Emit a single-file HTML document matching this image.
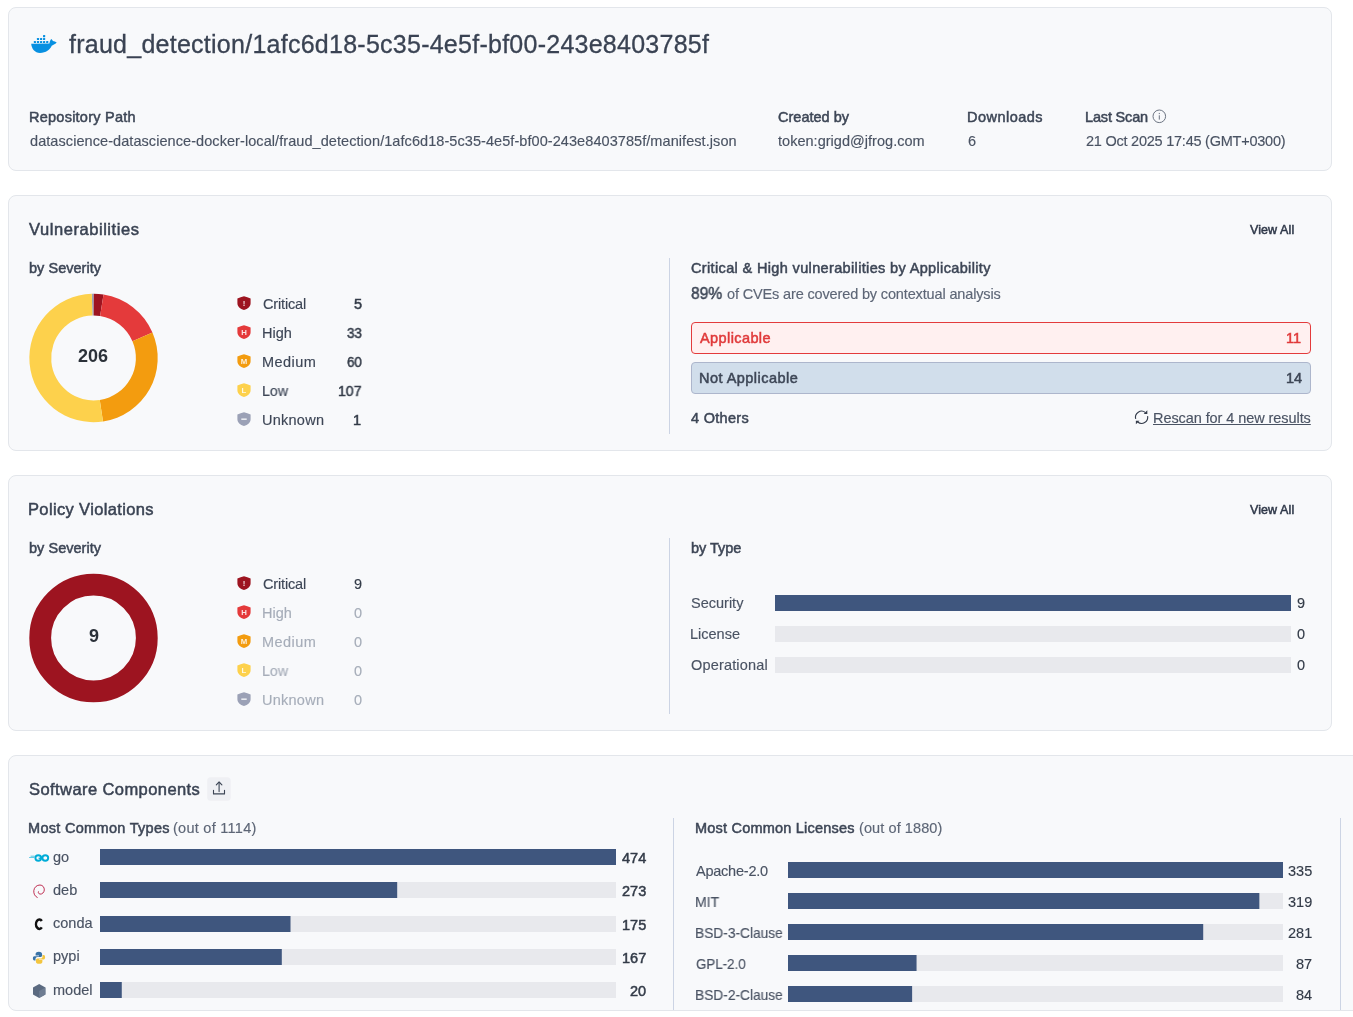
<!DOCTYPE html>
<html><head><meta charset="utf-8"><title>fraud_detection</title>
<style>
html,body{margin:0;padding:0;background:#ffffff;width:1353px;height:1017px;overflow:hidden;position:relative;font-family:"Liberation Sans",sans-serif;}
.card{position:absolute;left:8px;width:1322px;background:#f8f9fb;border:1px solid #e3e6eb;border-radius:8px;box-sizing:content-box;}
.t{position:absolute;will-change:transform;white-space:nowrap;line-height:1;font-family:"Liberation Sans",sans-serif;}
.box{position:absolute;box-sizing:border-box;border-radius:4px;}
.vline{position:absolute;width:1px;background:#ccd4e4;}
svg.full{position:absolute;left:0;top:0;}
</style></head><body>
<div class="card" style="top:7px;height:162px;"></div>
<div class="card" style="top:195px;height:254px;"></div>
<div class="card" style="top:475px;height:254px;"></div>
<div class="card" style="top:755px;height:254px;width:1400px;"></div>
<div class="vline" style="left:669px;top:258px;height:176px;"></div>
<div class="vline" style="left:669px;top:538px;height:176px;"></div>
<div class="vline" style="left:673px;top:818px;height:192px;"></div>
<div class="vline" style="left:1340px;top:818px;height:192px;"></div>
<div class="box" style="left:691px;top:322px;width:620px;height:32px;background:#fff0f0;border:1px solid #e33b3c;"></div>
<div class="box" style="left:691px;top:362px;width:620px;height:32px;background:#d1deeb;border:1px solid #adb6cc;"></div>
<svg class="full" width="1353" height="1017" viewBox="0 0 1353 1017" style="will-change:transform">
<path fill="#0890e1" d="M31.2,43.8 L49.4,43.6 C49.6,41.8 50.3,39.8 51.4,38.9 C52,39.5 52.6,40.4 52.9,41.1 C54.2,41.2 55.6,41.7 56.7,42.4 C55.9,43.5 54.9,44.2 53.9,44.5 C53,45.2 52.2,45.6 51.7,45.8 C50,49.8 46,52.9 40,52.9 C34.8,52.9 31.7,49 31.2,43.8 Z"/><rect x="43.0" y="35.1" width="2.2" height="2.1" rx="0.5" fill="#0890e1"/><rect x="36.9" y="38.0" width="2.2" height="2.1" rx="0.5" fill="#0890e1"/><rect x="40.0" y="38.0" width="2.2" height="2.1" rx="0.5" fill="#0890e1"/><rect x="43.0" y="38.0" width="2.2" height="2.1" rx="0.5" fill="#0890e1"/><rect x="33.8" y="41.0" width="2.2" height="2.1" rx="0.5" fill="#0890e1"/><rect x="36.9" y="41.0" width="2.2" height="2.1" rx="0.5" fill="#0890e1"/><rect x="40.0" y="41.0" width="2.2" height="2.1" rx="0.5" fill="#0890e1"/><rect x="43.0" y="41.0" width="2.2" height="2.1" rx="0.5" fill="#0890e1"/><rect x="46.1" y="41.0" width="2.2" height="2.1" rx="0.5" fill="#0890e1"/><circle cx="1159.3" cy="116.3" r="6.3" fill="none" stroke="#6b7381" stroke-width="1"/><rect x="1158.8" y="115.3" width="1" height="4.3" fill="#6b7381"/><rect x="1158.8" y="112.9" width="1" height="1.2" fill="#6b7381"/><path d="M91.82,293.82 A64.2,64.2 0 0 1 93.78,293.80 L93.68,315.60 A42.4,42.4 0 0 0 92.39,315.61 Z" fill="#9ba1b6"/><path d="M93.78,293.80 A64.2,64.2 0 0 1 103.53,294.59 L100.12,316.12 A42.4,42.4 0 0 0 93.68,315.60 Z" fill="#9d1420"/><path d="M103.53,294.59 A64.2,64.2 0 0 1 152.44,332.56 L132.43,341.20 A42.4,42.4 0 0 0 100.12,316.12 Z" fill="#e43a3b"/><path d="M152.44,332.56 A64.2,64.2 0 0 1 102.98,421.50 L99.76,399.94 A42.4,42.4 0 0 0 132.43,341.20 Z" fill="#f39c0f"/><path d="M102.98,421.50 A64.2,64.2 0 1 1 91.82,293.82 L92.39,315.61 A42.4,42.4 0 1 0 99.76,399.94 Z" fill="#fdd14c"/><circle cx="93.5" cy="638" r="53.3" fill="none" stroke="#9d1420" stroke-width="21.800000000000004"/><path d="M244,296.2 C246.2,296.9 248.5,297.6 250.6,298.6 L250.6,303.2 C250.6,306.6 247.8,308.9 244,310 C240.2,308.9 237.4,306.6 237.4,303.2 L237.4,298.6 C239.5,297.6 241.8,296.9 244,296.2 Z" fill="#9d1420"/><text x="244" y="306" font-family="Liberation Sans" font-weight="700" font-size="7.8" fill="#fff" fill-opacity="0.85" text-anchor="middle">!</text><path d="M244,325.2 C246.2,325.9 248.5,326.6 250.6,327.6 L250.6,332.2 C250.6,335.6 247.8,337.9 244,339 C240.2,337.9 237.4,335.6 237.4,332.2 L237.4,327.6 C239.5,326.6 241.8,325.9 244,325.2 Z" fill="#e43a3b"/><text x="244" y="335" font-family="Liberation Sans" font-weight="700" font-size="7.8" fill="#fff" fill-opacity="0.85" text-anchor="middle">H</text><path d="M244,354.2 C246.2,354.9 248.5,355.6 250.6,356.6 L250.6,361.2 C250.6,364.6 247.8,366.9 244,368 C240.2,366.9 237.4,364.6 237.4,361.2 L237.4,356.6 C239.5,355.6 241.8,354.9 244,354.2 Z" fill="#f39c0f"/><text x="244" y="364" font-family="Liberation Sans" font-weight="700" font-size="7.8" fill="#fff" fill-opacity="0.85" text-anchor="middle">M</text><path d="M244,383.2 C246.2,383.9 248.5,384.6 250.6,385.6 L250.6,390.2 C250.6,393.6 247.8,395.9 244,397 C240.2,395.9 237.4,393.6 237.4,390.2 L237.4,385.6 C239.5,384.6 241.8,383.9 244,383.2 Z" fill="#fdd14c"/><text x="244" y="393" font-family="Liberation Sans" font-weight="700" font-size="7.8" fill="#fff" fill-opacity="0.85" text-anchor="middle">L</text><path d="M244,412.2 C246.2,412.9 248.5,413.6 250.6,414.6 L250.6,419.2 C250.6,422.6 247.8,424.9 244,426 C240.2,424.9 237.4,422.6 237.4,419.2 L237.4,414.6 C239.5,413.6 241.8,412.9 244,412.2 Z" fill="#9ba1b6"/><rect x="241.3" y="418.4" width="5.4" height="1.6" fill="#e9ebf0"/><path d="M244,576.2 C246.2,576.9 248.5,577.6 250.6,578.6 L250.6,583.2 C250.6,586.6 247.8,588.9 244,590 C240.2,588.9 237.4,586.6 237.4,583.2 L237.4,578.6 C239.5,577.6 241.8,576.9 244,576.2 Z" fill="#9d1420"/><text x="244" y="586" font-family="Liberation Sans" font-weight="700" font-size="7.8" fill="#fff" fill-opacity="0.85" text-anchor="middle">!</text><path d="M244,605.2 C246.2,605.9 248.5,606.6 250.6,607.6 L250.6,612.2 C250.6,615.6 247.8,617.9 244,619 C240.2,617.9 237.4,615.6 237.4,612.2 L237.4,607.6 C239.5,606.6 241.8,605.9 244,605.2 Z" fill="#e43a3b"/><text x="244" y="615" font-family="Liberation Sans" font-weight="700" font-size="7.8" fill="#fff" fill-opacity="0.85" text-anchor="middle">H</text><path d="M244,634.2 C246.2,634.9 248.5,635.6 250.6,636.6 L250.6,641.2 C250.6,644.6 247.8,646.9 244,648 C240.2,646.9 237.4,644.6 237.4,641.2 L237.4,636.6 C239.5,635.6 241.8,634.9 244,634.2 Z" fill="#f39c0f"/><text x="244" y="644" font-family="Liberation Sans" font-weight="700" font-size="7.8" fill="#fff" fill-opacity="0.85" text-anchor="middle">M</text><path d="M244,663.2 C246.2,663.9 248.5,664.6 250.6,665.6 L250.6,670.2 C250.6,673.6 247.8,675.9 244,677 C240.2,675.9 237.4,673.6 237.4,670.2 L237.4,665.6 C239.5,664.6 241.8,663.9 244,663.2 Z" fill="#fdd14c"/><text x="244" y="673" font-family="Liberation Sans" font-weight="700" font-size="7.8" fill="#fff" fill-opacity="0.85" text-anchor="middle">L</text><path d="M244,692.2 C246.2,692.9 248.5,693.6 250.6,694.6 L250.6,699.2 C250.6,702.6 247.8,704.9 244,706 C240.2,704.9 237.4,702.6 237.4,699.2 L237.4,694.6 C239.5,693.6 241.8,692.9 244,692.2 Z" fill="#9ba1b6"/><rect x="241.3" y="698.4" width="5.4" height="1.6" fill="#e9ebf0"/><g fill="none" stroke="#343c4b" stroke-width="1.15"><path d="M1135.7,418.9 A6.1,6.1 0 0 1 1145.5,412.6"/><path d="M1147.6,416.2 A6.1,6.1 0 0 1 1137.7,422.0"/></g><path d="M1147.3,410.3 L1147.3,413.9 L1143.7,413.9 Z" fill="#343c4b"/><path d="M1135.9,420.7 L1139.5,420.7 L1135.9,424.3 Z" fill="#343c4b"/><rect x="207.2" y="777.2" width="23.5" height="23.5" rx="3.5" fill="#eff0f4"/><g fill="none" stroke="#3d4656" stroke-width="1.1" stroke-linecap="round" stroke-linejoin="round"><path d="M213.5,790.2 L213.5,793.9 L224.5,793.9 L224.5,790.2"/><path d="M219.1,791.6 L219.1,782.4"/><path d="M216.3,784.8 L219.1,782 L221.9,784.8"/></g><rect x="775" y="595.00" width="516" height="16" fill="#e8e9ed"/><rect x="775" y="595.00" width="516.00" height="16" fill="#3f567e"/><rect x="775" y="626.00" width="516" height="16" fill="#e8e9ed"/><rect x="775" y="657.00" width="516" height="16" fill="#e8e9ed"/><rect x="100" y="849.00" width="516" height="16" fill="#e8e9ed"/><rect x="100" y="849.00" width="516.00" height="16" fill="#3f567e"/><rect x="100" y="882.00" width="516" height="16" fill="#e8e9ed"/><rect x="100" y="882.00" width="297.19" height="16" fill="#3f567e"/><rect x="100" y="916.00" width="516" height="16" fill="#e8e9ed"/><rect x="100" y="916.00" width="190.51" height="16" fill="#3f567e"/><rect x="100" y="949.00" width="516" height="16" fill="#e8e9ed"/><rect x="100" y="949.00" width="181.80" height="16" fill="#3f567e"/><rect x="100" y="982.00" width="516" height="16" fill="#e8e9ed"/><rect x="100" y="982.00" width="21.77" height="16" fill="#3f567e"/><rect x="788" y="862.00" width="495" height="16" fill="#e8e9ed"/><rect x="788" y="862.00" width="495.00" height="16" fill="#3f567e"/><rect x="788" y="893.00" width="495" height="16" fill="#e8e9ed"/><rect x="788" y="893.00" width="471.36" height="16" fill="#3f567e"/><rect x="788" y="924.00" width="495" height="16" fill="#e8e9ed"/><rect x="788" y="924.00" width="415.21" height="16" fill="#3f567e"/><rect x="788" y="955.00" width="495" height="16" fill="#e8e9ed"/><rect x="788" y="955.00" width="128.55" height="16" fill="#3f567e"/><rect x="788" y="986.00" width="495" height="16" fill="#e8e9ed"/><rect x="788" y="986.00" width="124.12" height="16" fill="#3f567e"/><g fill="none" stroke="#00acd7" stroke-width="1.9"><ellipse cx="38.3" cy="858" rx="2.9" ry="2.7"/><ellipse cx="45.3" cy="858" rx="2.9" ry="2.7"/></g><rect x="38.6" y="857.6" width="2.2" height="1.3" fill="#00acd7"/><g stroke="#00acd7" stroke-width="0.8" stroke-linecap="round" opacity="0.85"><path d="M29.5,857.6 L34,857.6"/><path d="M31,856.2 L34.3,856.2"/></g><path d="M37.6,897.6 C34.9,896.4 33.5,893.6 33.8,890.6 C34.2,887.2 36.9,885 40,885 C42.8,885.1 44.4,887.4 44.3,889.9 C44.2,892.4 42.2,894.3 40.1,894.1 C38.6,893.9 37.9,892.6 38.5,891.4" fill="none" stroke="#b8183f" stroke-width="0.9"/><path d="M41.8,921.0 A3.3,4.75 0 1 0 41.8,927.3" fill="none" stroke="#111" stroke-width="2.5"/><path d="M38.9,951.8 C36.3,951.8 35.6,952.9 35.6,954.2 L35.6,955.6 L39,955.6 L39,956.2 L34.4,956.2 C33.1,956.2 32.9,957.5 32.9,958.3 C32.9,959.6 33.3,960.5 34.4,960.5 L35.5,960.5 L35.5,958.9 C35.5,957.8 36.4,957 37.4,957 L40.5,957 C41.4,957 42.1,956.2 42.1,955.4 L42.1,954.2 C42.1,952.9 41.1,951.8 38.9,951.8 Z" fill="#3a73a6"/><path d="M39.1,963.8 C41.7,963.8 42.4,962.7 42.4,961.4 L42.4,960 L39,960 L39,959.4 L43.6,959.4 C44.9,959.4 45.1,958.1 45.1,957.3 C45.1,956 44.7,955.1 43.6,955.1 L42.5,955.1 L42.5,956.7 C42.5,957.8 41.6,958.6 40.6,958.6 L37.5,958.6 C36.6,958.6 35.9,959.4 35.9,960.2 L35.9,961.4 C35.9,962.7 36.9,963.8 39.1,963.8 Z" fill="#f3c53f"/><path d="M39.2,984 L45.4,987.5 L45.4,994.6 L39.2,998.1 L33,994.6 L33,987.5 Z" fill="#5b6a80"/><path d="M39.2,991 L45.4,987.5 L45.4,994.6 L39.2,998.1 Z" fill="#6f7d92"/>
</svg>
<div class="t" style="left:69.00px;top:32px;font-size:25px;font-weight:400;color:#3a4353;-webkit-text-stroke:0.3px #3a4353;letter-spacing:0.256px;">fraud_detection/1afc6d18-5c35-4e5f-bf00-243e8403785f</div>
<div class="t" style="left:28.60px;top:110px;font-size:14.5px;font-weight:400;color:#3d4656;-webkit-text-stroke:0.5px #3d4656;letter-spacing:0.243px;">Repository Path</div>
<div class="t" style="left:29.60px;top:134px;font-size:14.5px;font-weight:400;color:#4a5363;-webkit-text-stroke:0.15px #4a5363;letter-spacing:0.068px;">datascience-datascience-docker-local/fraud_detection/1afc6d18-5c35-4e5f-bf00-243e8403785f/manifest.json</div>
<div class="t" style="left:778.40px;top:110px;font-size:14.5px;font-weight:400;color:#3d4656;-webkit-text-stroke:0.5px #3d4656;letter-spacing:0.014px;">Created by</div>
<div class="t" style="left:778.40px;top:134px;font-size:14.5px;font-weight:400;color:#4a5363;-webkit-text-stroke:0.15px #4a5363;letter-spacing:0.029px;">token:grigd@jfrog.com</div>
<div class="t" style="left:967.40px;top:110px;font-size:14.5px;font-weight:400;color:#3d4656;-webkit-text-stroke:0.5px #3d4656;letter-spacing:0.477px;">Downloads</div>
<div class="t" style="left:968.40px;top:134px;font-size:14.5px;font-weight:400;color:#4a5363;-webkit-text-stroke:0.15px #4a5363;">6</div>
<div class="t" style="left:1084.80px;top:110px;font-size:14.5px;font-weight:400;color:#3d4656;-webkit-text-stroke:0.5px #3d4656;letter-spacing:-0.165px;">Last Scan</div>
<div class="t" style="left:1085.80px;top:134px;font-size:14.5px;font-weight:400;color:#4a5363;-webkit-text-stroke:0.15px #4a5363;letter-spacing:-0.237px;">21 Oct 2025 17:45 (GMT+0300)</div>
<div class="t" style="left:29.10px;top:221px;font-size:16.5px;font-weight:400;color:#3a4353;-webkit-text-stroke:0.5px #3a4353;letter-spacing:0.560px;">Vulnerabilities</div>
<div class="t" style="left:1250.10px;top:224px;font-size:12.5px;font-weight:400;color:#2f3849;-webkit-text-stroke:0.5px #2f3849;letter-spacing:0.092px;">View All</div>
<div class="t" style="left:29.10px;top:261px;font-size:14.5px;font-weight:400;color:#3d4656;-webkit-text-stroke:0.5px #3d4656;letter-spacing:0.033px;">by Severity</div>
<div class="t" style="left:262.70px;top:297px;font-size:14.5px;font-weight:400;color:#3d4656;-webkit-text-stroke:0.15px #3d4656;letter-spacing:-0.155px;">Critical</div>
<div class="t" style="left:353.80px;top:297px;font-size:14.5px;font-weight:400;color:#333b48;-webkit-text-stroke:0.5px #333b48;">5</div>
<div class="t" style="left:261.70px;top:326px;font-size:14.5px;font-weight:400;color:#3d4656;-webkit-text-stroke:0.15px #3d4656;letter-spacing:0.014px;">High</div>
<div class="t" style="left:347.00px;top:326px;font-size:14.5px;font-weight:400;color:#333b48;-webkit-text-stroke:0.5px #333b48;transform:scaleX(0.9213);transform-origin:0 0;">33</div>
<div class="t" style="left:261.70px;top:355px;font-size:14.5px;font-weight:400;color:#3d4656;-webkit-text-stroke:0.15px #3d4656;letter-spacing:0.461px;">Medium</div>
<div class="t" style="left:347.00px;top:355px;font-size:14.5px;font-weight:400;color:#333b48;-webkit-text-stroke:0.5px #333b48;transform:scaleX(0.9213);transform-origin:0 0;">60</div>
<div class="t" style="left:261.72px;top:384px;font-size:14.5px;font-weight:400;color:#3d4656;-webkit-text-stroke:0.15px #3d4656;transform:scaleX(0.9759);transform-origin:0 0;">Low</div>
<div class="t" style="left:338.43px;top:384px;font-size:14.5px;font-weight:400;color:#333b48;-webkit-text-stroke:0.5px #333b48;transform:scaleX(0.9685);transform-origin:0 0;">107</div>
<div class="t" style="left:261.70px;top:413px;font-size:14.5px;font-weight:400;color:#3d4656;-webkit-text-stroke:0.15px #3d4656;letter-spacing:0.252px;">Unknown</div>
<div class="t" style="left:352.60px;top:413px;font-size:14.5px;font-weight:400;color:#333b48;-webkit-text-stroke:0.5px #333b48;">1</div>
<div class="t" style="left:78.49px;top:347px;font-size:18px;font-weight:700;color:#2b3139;">206</div>
<div class="t" style="left:691.00px;top:261px;font-size:14.5px;font-weight:400;color:#3d4656;-webkit-text-stroke:0.5px #3d4656;letter-spacing:0.353px;">Critical &amp; High vulnerabilities by Applicability</div>
<div class="t" style="left:691.00px;top:285px;font-size:17px;font-weight:400;color:#3d4656;-webkit-text-stroke:0.5px #3d4656;transform:scaleX(0.9142);transform-origin:0 0;">89%</div>
<div class="t" style="left:727.00px;top:287px;font-size:14.5px;font-weight:400;color:#5d6676;-webkit-text-stroke:0.15px #5d6676;letter-spacing:-0.144px;">of CVEs are covered by contextual analysis</div>
<div class="t" style="left:700.40px;top:331px;font-size:14.5px;font-weight:400;color:#e0393a;-webkit-text-stroke:0.5px #e0393a;letter-spacing:0.406px;">Applicable</div>
<div class="t" style="left:1285.81px;top:331px;font-size:14.5px;font-weight:400;color:#e0393a;-webkit-text-stroke:0.5px #e0393a;">11</div>
<div class="t" style="left:699.40px;top:371px;font-size:14.5px;font-weight:400;color:#3d4656;-webkit-text-stroke:0.5px #3d4656;letter-spacing:0.467px;">Not Applicable</div>
<div class="t" style="left:1285.54px;top:371px;font-size:14.5px;font-weight:400;color:#3d4656;-webkit-text-stroke:0.5px #3d4656;">14</div>
<div class="t" style="left:691.00px;top:411px;font-size:14.5px;font-weight:400;color:#3d4656;-webkit-text-stroke:0.5px #3d4656;letter-spacing:0.306px;">4 Others</div>
<div class="t" style="left:1153.00px;top:411px;font-size:14.5px;font-weight:400;color:#4a5363;-webkit-text-stroke:0.15px #4a5363;letter-spacing:-0.075px;text-decoration:underline;text-underline-offset:1px;">Rescan for 4 new results</div>
<div class="t" style="left:28.10px;top:501px;font-size:16.5px;font-weight:400;color:#3a4353;-webkit-text-stroke:0.5px #3a4353;letter-spacing:0.357px;">Policy Violations</div>
<div class="t" style="left:1250.10px;top:504px;font-size:12.5px;font-weight:400;color:#2f3849;-webkit-text-stroke:0.5px #2f3849;letter-spacing:0.092px;">View All</div>
<div class="t" style="left:29.10px;top:541px;font-size:14.5px;font-weight:400;color:#3d4656;-webkit-text-stroke:0.5px #3d4656;letter-spacing:0.033px;">by Severity</div>
<div class="t" style="left:262.70px;top:577px;font-size:14.5px;font-weight:400;color:#3d4656;-webkit-text-stroke:0.15px #3d4656;letter-spacing:-0.155px;">Critical</div>
<div class="t" style="left:353.80px;top:577px;font-size:14.5px;font-weight:400;color:#333b48;-webkit-text-stroke:0.15px #333b48;">9</div>
<div class="t" style="left:261.70px;top:606px;font-size:14.5px;font-weight:400;color:#a6adb9;-webkit-text-stroke:0.15px #a6adb9;letter-spacing:0.014px;">High</div>
<div class="t" style="left:353.80px;top:606px;font-size:14.5px;font-weight:400;color:#a6adb9;-webkit-text-stroke:0.15px #a6adb9;">0</div>
<div class="t" style="left:261.70px;top:635px;font-size:14.5px;font-weight:400;color:#a6adb9;-webkit-text-stroke:0.15px #a6adb9;letter-spacing:0.461px;">Medium</div>
<div class="t" style="left:353.80px;top:635px;font-size:14.5px;font-weight:400;color:#a6adb9;-webkit-text-stroke:0.15px #a6adb9;">0</div>
<div class="t" style="left:261.72px;top:664px;font-size:14.5px;font-weight:400;color:#a6adb9;-webkit-text-stroke:0.15px #a6adb9;transform:scaleX(0.9759);transform-origin:0 0;">Low</div>
<div class="t" style="left:353.80px;top:664px;font-size:14.5px;font-weight:400;color:#a6adb9;-webkit-text-stroke:0.15px #a6adb9;">0</div>
<div class="t" style="left:261.70px;top:693px;font-size:14.5px;font-weight:400;color:#a6adb9;-webkit-text-stroke:0.15px #a6adb9;letter-spacing:0.252px;">Unknown</div>
<div class="t" style="left:353.80px;top:693px;font-size:14.5px;font-weight:400;color:#a6adb9;-webkit-text-stroke:0.15px #a6adb9;">0</div>
<div class="t" style="left:88.50px;top:627px;font-size:18px;font-weight:700;color:#2b3139;">9</div>
<div class="t" style="left:691.00px;top:541px;font-size:14.5px;font-weight:400;color:#3d4656;-webkit-text-stroke:0.5px #3d4656;letter-spacing:-0.052px;">by Type</div>
<div class="t" style="left:691.00px;top:596px;font-size:14.5px;font-weight:400;color:#4a5363;-webkit-text-stroke:0.15px #4a5363;">Security</div>
<div class="t" style="left:1297.00px;top:596px;font-size:14.5px;font-weight:400;color:#333b48;-webkit-text-stroke:0.15px #333b48;">9</div>
<div class="t" style="left:690.00px;top:627px;font-size:14.5px;font-weight:400;color:#4a5363;-webkit-text-stroke:0.15px #4a5363;">License</div>
<div class="t" style="left:1297.00px;top:627px;font-size:14.5px;font-weight:400;color:#333b48;-webkit-text-stroke:0.15px #333b48;">0</div>
<div class="t" style="left:691.00px;top:658px;font-size:14.5px;font-weight:400;color:#4a5363;-webkit-text-stroke:0.15px #4a5363;letter-spacing:0.166px;">Operational</div>
<div class="t" style="left:1297.00px;top:658px;font-size:14.5px;font-weight:400;color:#333b48;-webkit-text-stroke:0.15px #333b48;">0</div>
<div class="t" style="left:28.90px;top:781px;font-size:16.5px;font-weight:400;color:#3a4353;-webkit-text-stroke:0.5px #3a4353;letter-spacing:0.422px;">Software Components</div>
<div class="t" style="left:27.90px;top:821px;font-size:14.5px;font-weight:400;color:#3d4656;-webkit-text-stroke:0.5px #3d4656;letter-spacing:0.304px;">Most Common Types</div>
<div class="t" style="left:173.40px;top:821px;font-size:14.5px;font-weight:400;color:#5d6676;-webkit-text-stroke:0.15px #5d6676;letter-spacing:0.272px;">(out of 1114)</div>
<div class="t" style="left:695.00px;top:821px;font-size:14.5px;font-weight:400;color:#3d4656;-webkit-text-stroke:0.5px #3d4656;letter-spacing:0.212px;">Most Common Licenses</div>
<div class="t" style="left:858.50px;top:821px;font-size:14.5px;font-weight:400;color:#5d6676;-webkit-text-stroke:0.15px #5d6676;letter-spacing:0.092px;">(out of 1880)</div>
<div class="t" style="left:52.50px;top:850px;font-size:14.5px;font-weight:400;color:#4a5363;-webkit-text-stroke:0.15px #4a5363;">go</div>
<div class="t" style="left:621.57px;top:851px;font-size:14.5px;font-weight:400;color:#333b48;-webkit-text-stroke:0.5px #333b48;">474</div>
<div class="t" style="left:52.50px;top:883px;font-size:14.5px;font-weight:400;color:#4a5363;-webkit-text-stroke:0.15px #4a5363;">deb</div>
<div class="t" style="left:621.57px;top:884px;font-size:14.5px;font-weight:400;color:#333b48;-webkit-text-stroke:0.5px #333b48;">273</div>
<div class="t" style="left:52.50px;top:916px;font-size:14.5px;font-weight:400;color:#4a5363;-webkit-text-stroke:0.15px #4a5363;">conda</div>
<div class="t" style="left:621.57px;top:918px;font-size:14.5px;font-weight:400;color:#333b48;-webkit-text-stroke:0.5px #333b48;">175</div>
<div class="t" style="left:52.50px;top:949px;font-size:14.5px;font-weight:400;color:#4a5363;-webkit-text-stroke:0.15px #4a5363;">pypi</div>
<div class="t" style="left:621.57px;top:951px;font-size:14.5px;font-weight:400;color:#333b48;-webkit-text-stroke:0.5px #333b48;">167</div>
<div class="t" style="left:52.50px;top:983px;font-size:14.5px;font-weight:400;color:#4a5363;-webkit-text-stroke:0.15px #4a5363;">model</div>
<div class="t" style="left:629.64px;top:984px;font-size:14.5px;font-weight:400;color:#333b48;-webkit-text-stroke:0.5px #333b48;">20</div>
<div class="t" style="left:696.00px;top:864px;font-size:14.5px;font-weight:400;color:#4a5363;-webkit-text-stroke:0.15px #4a5363;letter-spacing:-0.233px;">Apache-2.0</div>
<div class="t" style="left:1287.97px;top:864px;font-size:14.5px;font-weight:400;color:#333b48;-webkit-text-stroke:0.15px #333b48;">335</div>
<div class="t" style="left:695.03px;top:895px;font-size:14.5px;font-weight:400;color:#4a5363;-webkit-text-stroke:0.15px #4a5363;transform:scaleX(0.9707);transform-origin:0 0;">MIT</div>
<div class="t" style="left:1287.97px;top:895px;font-size:14.5px;font-weight:400;color:#333b48;-webkit-text-stroke:0.15px #333b48;">319</div>
<div class="t" style="left:695.05px;top:926px;font-size:14.5px;font-weight:400;color:#4a5363;-webkit-text-stroke:0.15px #4a5363;transform:scaleX(0.9475);transform-origin:0 0;">BSD-3-Clause</div>
<div class="t" style="left:1287.97px;top:926px;font-size:14.5px;font-weight:400;color:#333b48;-webkit-text-stroke:0.15px #333b48;">281</div>
<div class="t" style="left:696.00px;top:957px;font-size:14.5px;font-weight:400;color:#4a5363;-webkit-text-stroke:0.15px #4a5363;transform:scaleX(0.9196);transform-origin:0 0;">GPL-2.0</div>
<div class="t" style="left:1296.04px;top:957px;font-size:14.5px;font-weight:400;color:#333b48;-webkit-text-stroke:0.15px #333b48;">87</div>
<div class="t" style="left:695.05px;top:988px;font-size:14.5px;font-weight:400;color:#4a5363;-webkit-text-stroke:0.15px #4a5363;transform:scaleX(0.9475);transform-origin:0 0;">BSD-2-Clause</div>
<div class="t" style="left:1296.04px;top:988px;font-size:14.5px;font-weight:400;color:#333b48;-webkit-text-stroke:0.15px #333b48;">84</div>
</body></html>
